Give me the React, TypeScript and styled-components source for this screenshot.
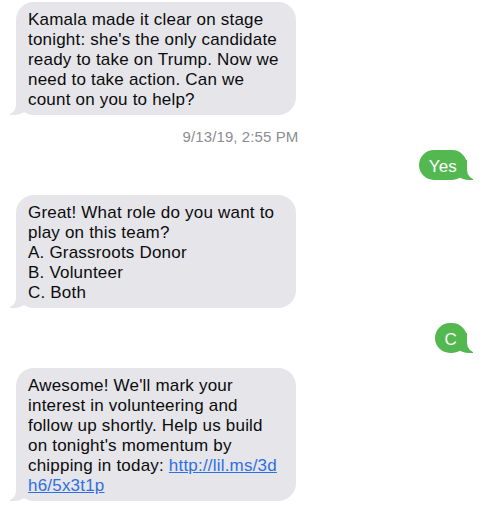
import styled, { createGlobalStyle } from 'styled-components'

const GlobalStyle = createGlobalStyle`
  body {
    margin: 0;
    background: #ffffff;
    font-family: "Liberation Sans", Arial, sans-serif;
  }
`

const Thread = styled.div`
  display: flex;
  flex-direction: column;
  padding: 2px 18px 12px 16px;
`

const Bubble = styled.div<{ $mine?: boolean }>`
  position: relative;
  z-index: 0;
  box-sizing: border-box;
  align-self: ${(p) => (p.$mine ? 'flex-end' : 'flex-start')};
  width: ${(p) => (p.$mine ? 'auto' : '280px')};
  padding: ${(p) => (p.$mine ? '7px 10px 3px' : '8px 12px 5px')};
  border-radius: 18px;
  background: ${(p) => (p.$mine ? '#53b850' : '#e5e5ea')};
  color: ${(p) => (p.$mine ? '#ffffff' : '#0c0c0c')};
  font-size: 17px;
  line-height: 20px;
  letter-spacing: 0.2px;
  white-space: nowrap;

  &::before {
    content: '';
    position: absolute;
    z-index: -1;
    bottom: 0;
    height: 20px;
    width: 20px;
    background: ${(p) => (p.$mine ? '#53b850' : '#e5e5ea')};
    ${(p) =>
      p.$mine
        ? 'right: -6px; border-bottom-left-radius: 16px 14px;'
        : 'left: -6px; border-bottom-right-radius: 16px 14px;'}
  }

  &::after {
    content: '';
    position: absolute;
    z-index: -1;
    bottom: 0;
    height: 20px;
    width: 26px;
    background: #ffffff;
    ${(p) =>
      p.$mine
        ? 'right: -26px; border-bottom-left-radius: 10px;'
        : 'left: -26px; border-bottom-right-radius: 10px;'}
  }
`

const Stamp = styled.div`
  margin: 13px 0 4px;
  text-align: center;
  padding-right: 2px;
  color: #8c8c91;
  font-size: 15px;
  line-height: 18px;
  letter-spacing: 0.1px;
`

const Gap = styled.div<{ $h: number }>`
  height: ${(p) => p.$h}px;
`

const Link = styled.a`
  color: #2f6fe0;
  text-decoration: underline;
`

export default function App() {
  return (
    <>
      <GlobalStyle />
      <Thread>
        <Bubble>
          Kamala made it clear on stage
          <br />
          tonight: she's the only candidate
          <br />
          ready to take on Trump. Now we
          <br />
          need to take action. Can we
          <br />
          count on you to help?
        </Bubble>
        <Stamp>9/13/19, 2:55 PM</Stamp>
        <Bubble $mine>Yes</Bubble>
        <Gap $h={15} />
        <Bubble>
          Great! What role do you want to
          <br />
          play on this team?
          <br />
          A. Grassroots Donor
          <br />
          B. Volunteer
          <br />
          C. Both
        </Bubble>
        <Gap $h={15} />
        <Bubble $mine>C</Bubble>
        <Gap $h={15} />
        <Bubble>
          Awesome! We'll mark your
          <br />
          interest in volunteering and
          <br />
          follow up shortly. Help us build
          <br />
          on tonight's momentum by
          <br />
          chipping in today: <Link href="#">http://lil.ms/3d</Link>
          <br />
          <Link href="#">h6/5x3t1p</Link>
        </Bubble>
      </Thread>
    </>
  )
}
